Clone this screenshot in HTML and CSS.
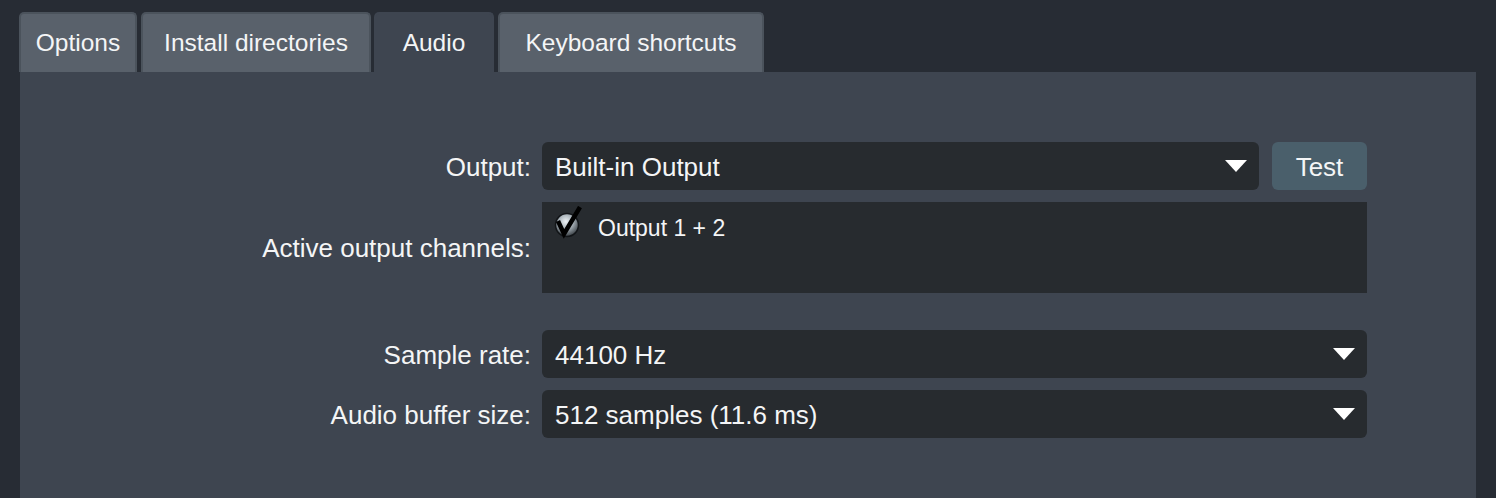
FILE: index.html
```html
<!DOCTYPE html>
<html lang="en">
<head>
  <meta charset="UTF-8">
  <title>Settings - Audio</title>
  <link rel="stylesheet" href="styles.css">
</head>
<body>
  <div class="tabs">
    <div class="tab tab-options">Options</div>
    <div class="tab tab-install">Install directories</div>
    <div class="tab tab-audio active">Audio</div>
    <div class="tab tab-keys">Keyboard shortcuts</div>
  </div>

  <div class="panel">
    <div class="form">
      <div class="label">Output:</div>
      <div class="field output-row">
        <div class="select wide"><span>Built-in Output</span><span class="arrow"></span></div>
        <button class="btn">Test</button>
      </div>

      <div class="label">Active output channels:</div>
      <div class="field">
        <div class="list">
          <div class="list-item">
            <svg class="check" width="30" height="34" viewBox="0 0 30 34">
              <defs>
                <radialGradient id="knob" cx="45%" cy="35%" r="65%">
                  <stop offset="0" stop-color="#eef3f6"/>
                  <stop offset="0.5" stop-color="#a3adb4"/>
                  <stop offset="1" stop-color="#3a4045"/>
                </radialGradient>
              </defs>
              <circle cx="14" cy="19" r="11.5" fill="url(#knob)" stroke="#121518" stroke-width="1.5"/>
              <path d="M5 15 L11 28 L27 1" fill="none" stroke="#000" stroke-width="4.5" stroke-linejoin="miter"/>
            </svg>
            <span>Output 1 + 2</span>
          </div>
        </div>
      </div>

      <div class="spacer"></div>

      <div class="label">Sample rate:</div>
      <div class="field">
        <div class="select"><span>44100 Hz</span><span class="arrow"></span></div>
      </div>

      <div class="label">Audio buffer size:</div>
      <div class="field">
        <div class="select"><span>512 samples (11.6 ms)</span><span class="arrow"></span></div>
      </div>
    </div>
  </div>
</body>
</html>
```

FILE: styles.css
```css
html, body {
  margin: 0;
  height: 100%;
}
body {
  background: #272c34;
  color: #f4f5f6;
  font-family: "Liberation Sans", Arial, sans-serif;
  font-size: 26px;
  overflow: hidden;
}

.tabs {
  display: flex;
  gap: 4px;
  padding: 12px 0 0 19px;
  height: 60px;
  box-sizing: content-box;
}
.tab {
  height: 60px;
  box-sizing: border-box;
  background: #59616b;
  border: 2px solid #4b535c;
  border-bottom: none;
  border-radius: 5px 5px 0 0;
  display: flex;
  align-items: center;
  justify-content: center;
  font-size: 24.5px;
}
.tab.active {
  background: #3e4550;
  border-color: #3e4550;
}
.tab-options { width: 118px; }
.tab-install { width: 230px; margin-right: -1px; }
.tab-audio { width: 120px; }
.tab-keys { width: 266px; }

.panel {
  margin: 0 20px 0 20px;
  background: #3e4550;
  height: 426px;
  padding-top: 70px;
  box-sizing: border-box;
}

.form {
  display: grid;
  grid-template-columns: 511px 825px;
  column-gap: 11px;
  row-gap: 12px;
  align-items: center;
}
.label {
  text-align: right;
  padding-top: 2px;
}
.spacer {
  grid-column: 1 / 3;
  height: 13px;
}

.output-row {
  display: flex;
  gap: 13px;
}
.select {
  height: 48px;
  box-sizing: border-box;
  background: #272b2f;
  border-radius: 6px;
  display: flex;
  align-items: center;
  justify-content: space-between;
  padding: 2px 12px 0 13px;
}
.select.wide {
  flex: 1;
}
.arrow {
  width: 0;
  height: 0;
  border-left: 11px solid transparent;
  border-right: 11px solid transparent;
  border-top: 12px solid #ffffff;
  margin-top: -2px;
}
.btn {
  width: 95px;
  height: 48px;
  border: none;
  border-radius: 6px;
  background: #4a5f6b;
  color: #f4f5f6;
  font-family: inherit;
  font-size: 26px;
  padding: 2px 0 0 0;
}

.list {
  height: 91px;
  background: #272b2f;
  box-sizing: border-box;
  padding: 4px 0 0 11px;
}
.list-item {
  display: flex;
  align-items: flex-start;
  font-size: 23px;
}
.list-item span {
  margin-left: 15px;
  margin-top: 9px;
}
```
